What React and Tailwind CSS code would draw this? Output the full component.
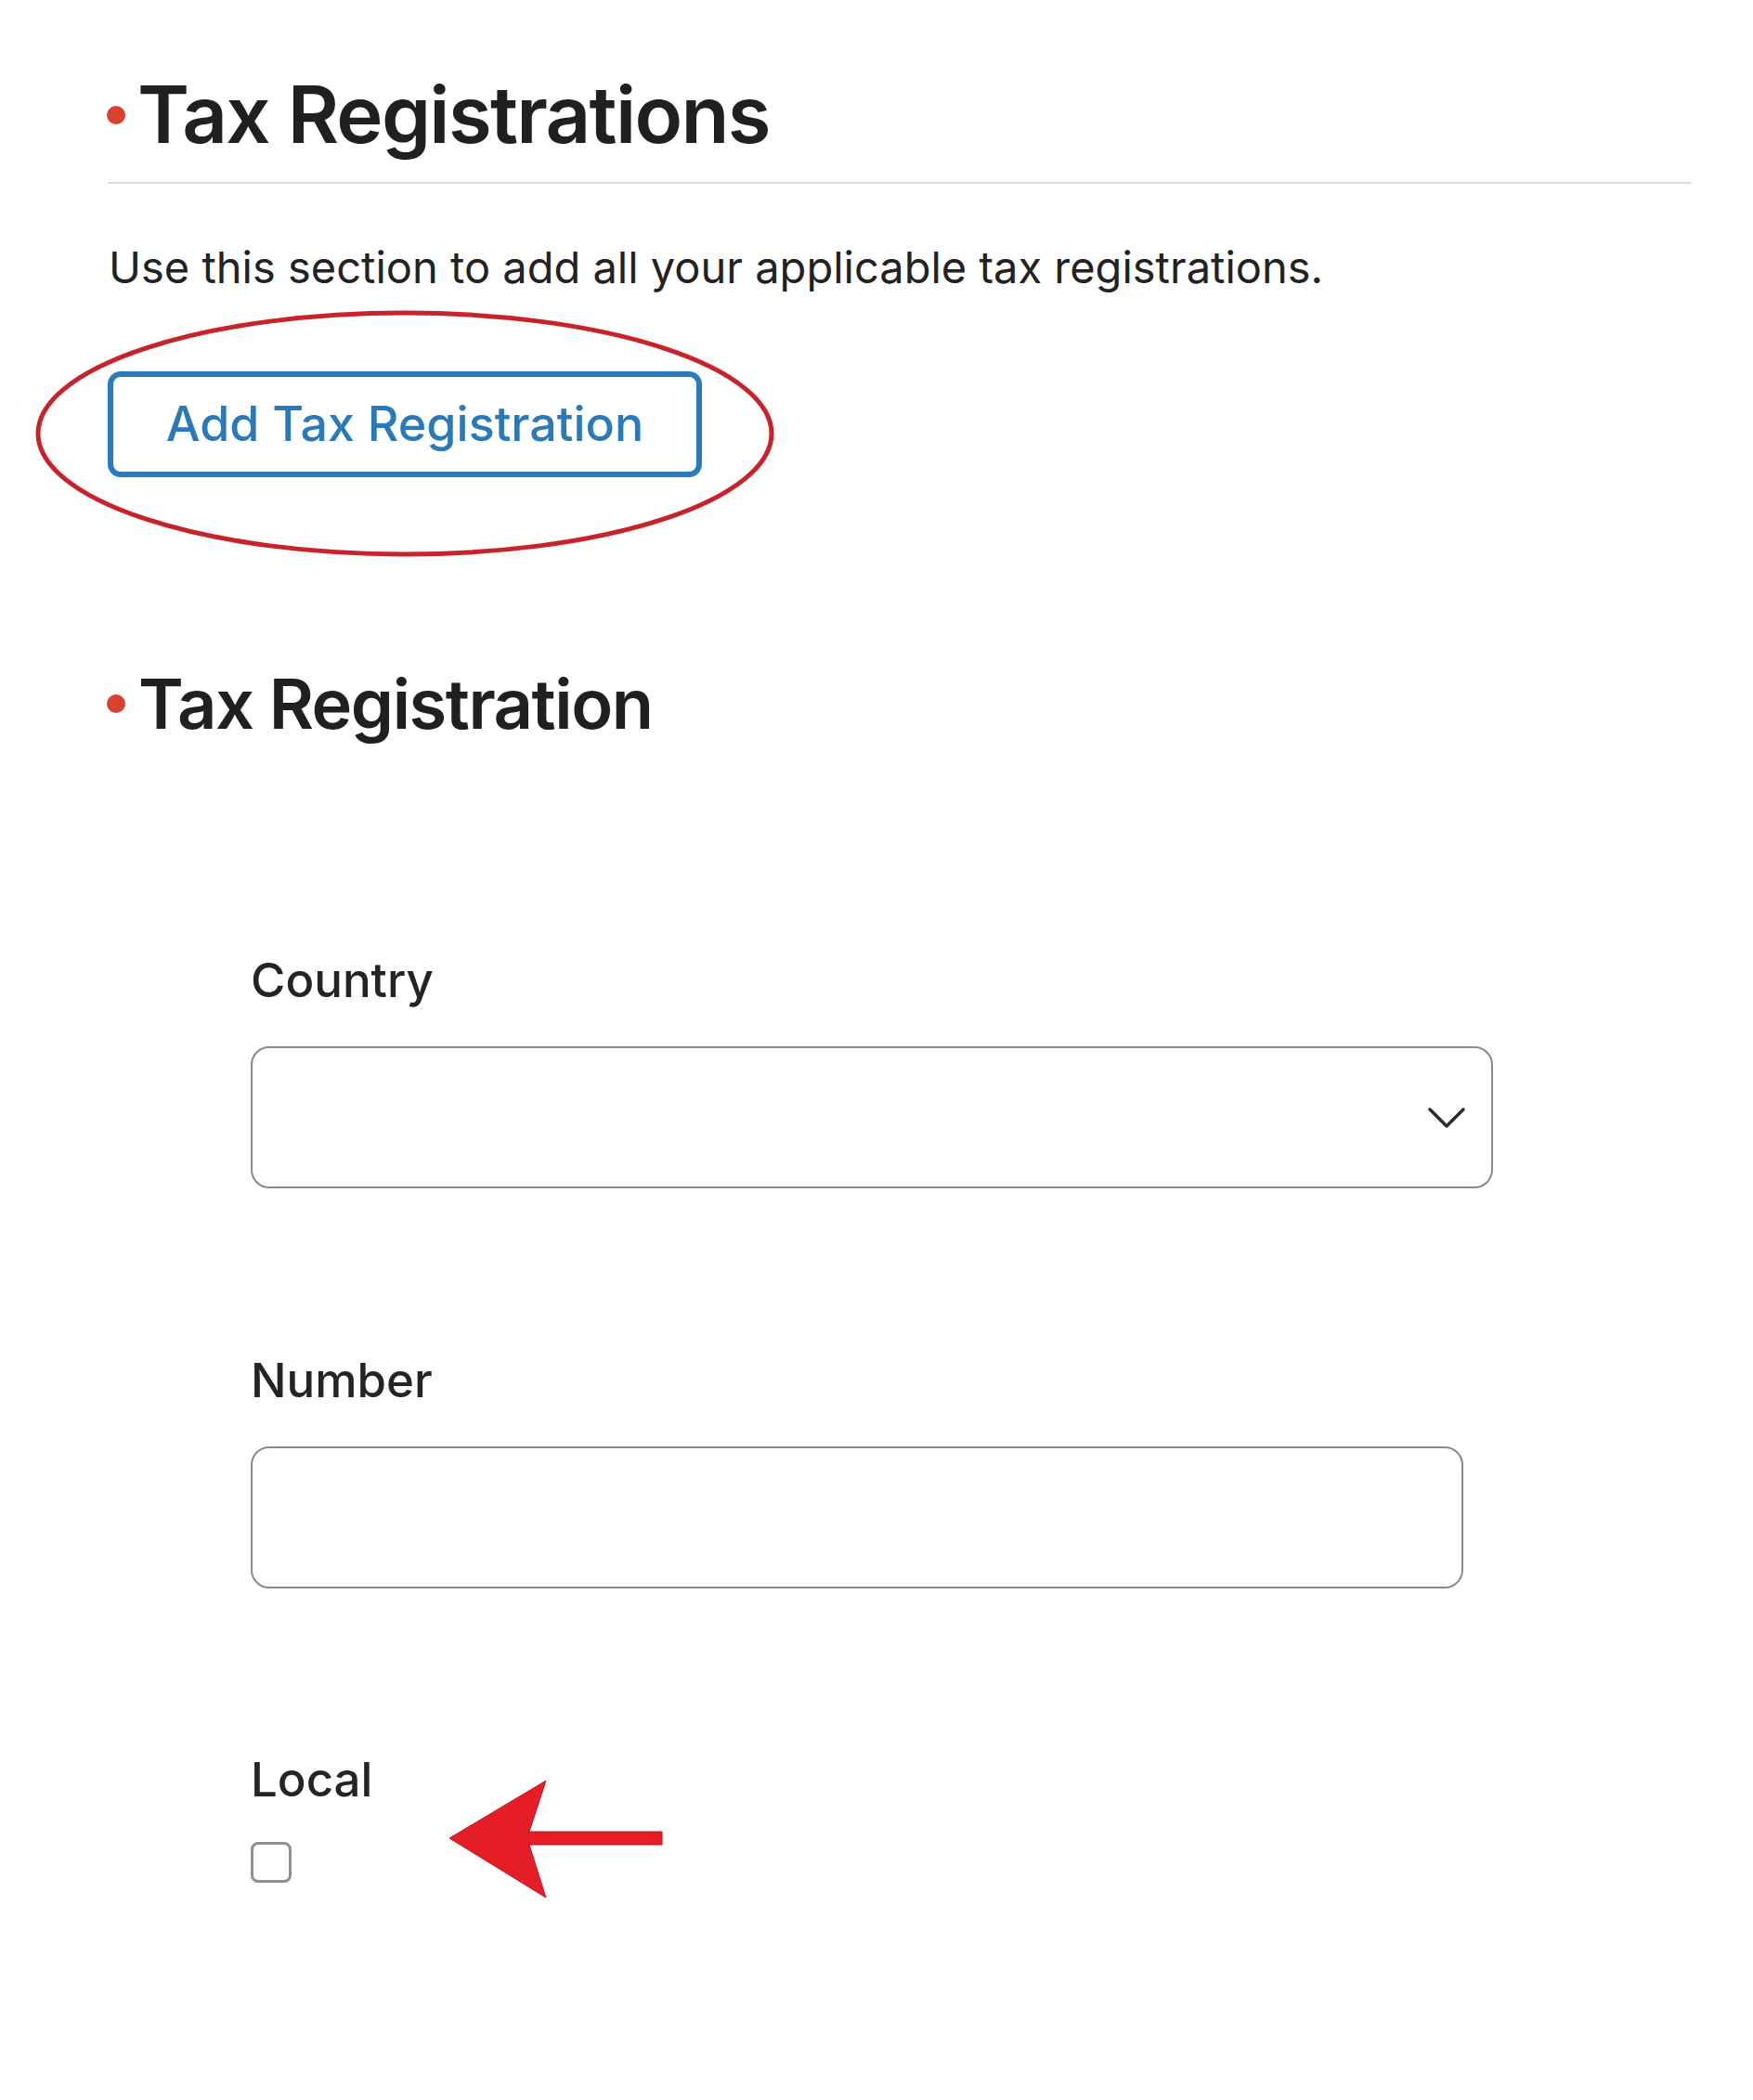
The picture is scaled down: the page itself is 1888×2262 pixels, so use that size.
import React from "react";

const font = { fontFamily: "Inter, 'Noto Sans', sans-serif" };

function Dot({ className }) {
  return <span className={"inline-block rounded-full bg-[#d8412f] " + className} />;
}

function Chevron() {
  return (
    <svg width="40" height="24" viewBox="0 0 40 24" fill="none">
      <polyline points="2,3 20,21 38,3" stroke="#2b2b2b" strokeWidth="3.4" strokeLinecap="round" strokeLinejoin="round" />
    </svg>
  );
}

function Field({ label, children, top }) {
  return (
    <div className={top}>
      <div className="text-[51px] leading-[60px] font-medium text-[#242424]">{label}</div>
      {children}
    </div>
  );
}

export default function App() {
  return (
    <div className="min-h-screen bg-white pt-[74px] pl-[116px] pr-[66px] pb-[200px] text-[#222]" style={font}>
      {/* section heading */}
      <div className="flex items-center">
        <Dot className="w-[20px] h-[20px] ml-[-1px] mr-[13px]" />
        <h1 className="text-[85px] leading-[100px] font-semibold tracking-[-0.02em] text-[#221f1f]">Tax Registrations</h1>
      </div>
      <div className="mt-[22px] h-[2px] bg-[#dedede]" />

      <p className="mt-[60px] ml-[1px] text-[47px] leading-[60px] text-[#222]">
        Use this section to add all your applicable tax registrations.
      </p>

      <div className="relative mt-[82px] w-[640px]">
        <button className="w-[640px] h-[114px] rounded-[14px] border-[6px] border-[#2a7bbd] bg-white text-[52px] font-medium text-[#2a7ab9]">
          Add Tax Registration
        </button>
        {/* highlight ring drawn over the button */}
        <svg className="absolute left-[-80px] top-[-68px] pointer-events-none" width="800" height="270" viewBox="0 0 800 270">
          <ellipse cx="400" cy="135" rx="395" ry="130" fill="none" stroke="#c8232b" strokeWidth="5" />
        </svg>
      </div>

      <div className="mt-[199px] flex items-center">
        <Dot className="w-[20px] h-[20px] ml-[-1px] mr-[14px]" />
        <h2 className="text-[74px] leading-[90px] font-semibold tracking-[-0.02em] text-[#221f1f]">Tax Registration</h2>
      </div>

      <div className="pl-[154px]">
        <Field label="Country" top="mt-[223px]">
          <div className="mt-[41px] w-[1338px] h-[153px] rounded-[20px] border-[2.5px] border-[#8a8a8a] flex items-center justify-end pr-[28px]">
            <Chevron />
          </div>
        </Field>

        <Field label="Number" top="mt-[177px]">
          <div className="mt-[41px] w-[1306px] h-[153px] rounded-[20px] border-[2.5px] border-[#8a8a8a]" />
        </Field>

        <Field label="Local" top="mt-[176px]">
          <div className="relative mt-[37px] h-[44px]">
            <div className="w-[44px] h-[44px] rounded-[8px] border-[3px] border-[#8f8f8f] bg-white" />
            <svg className="absolute left-[214px] top-[-66px]" width="230" height="127" viewBox="0 0 230 127">
              <path d="M0 62 L104 0 L86 55 L229 55 L229 69 L86 69 L104 126 Z" fill="#e41d27" stroke="#c4161e" strokeWidth="1" strokeLinejoin="miter" />
            </svg>
          </div>
        </Field>
      </div>
    </div>
  );
}
